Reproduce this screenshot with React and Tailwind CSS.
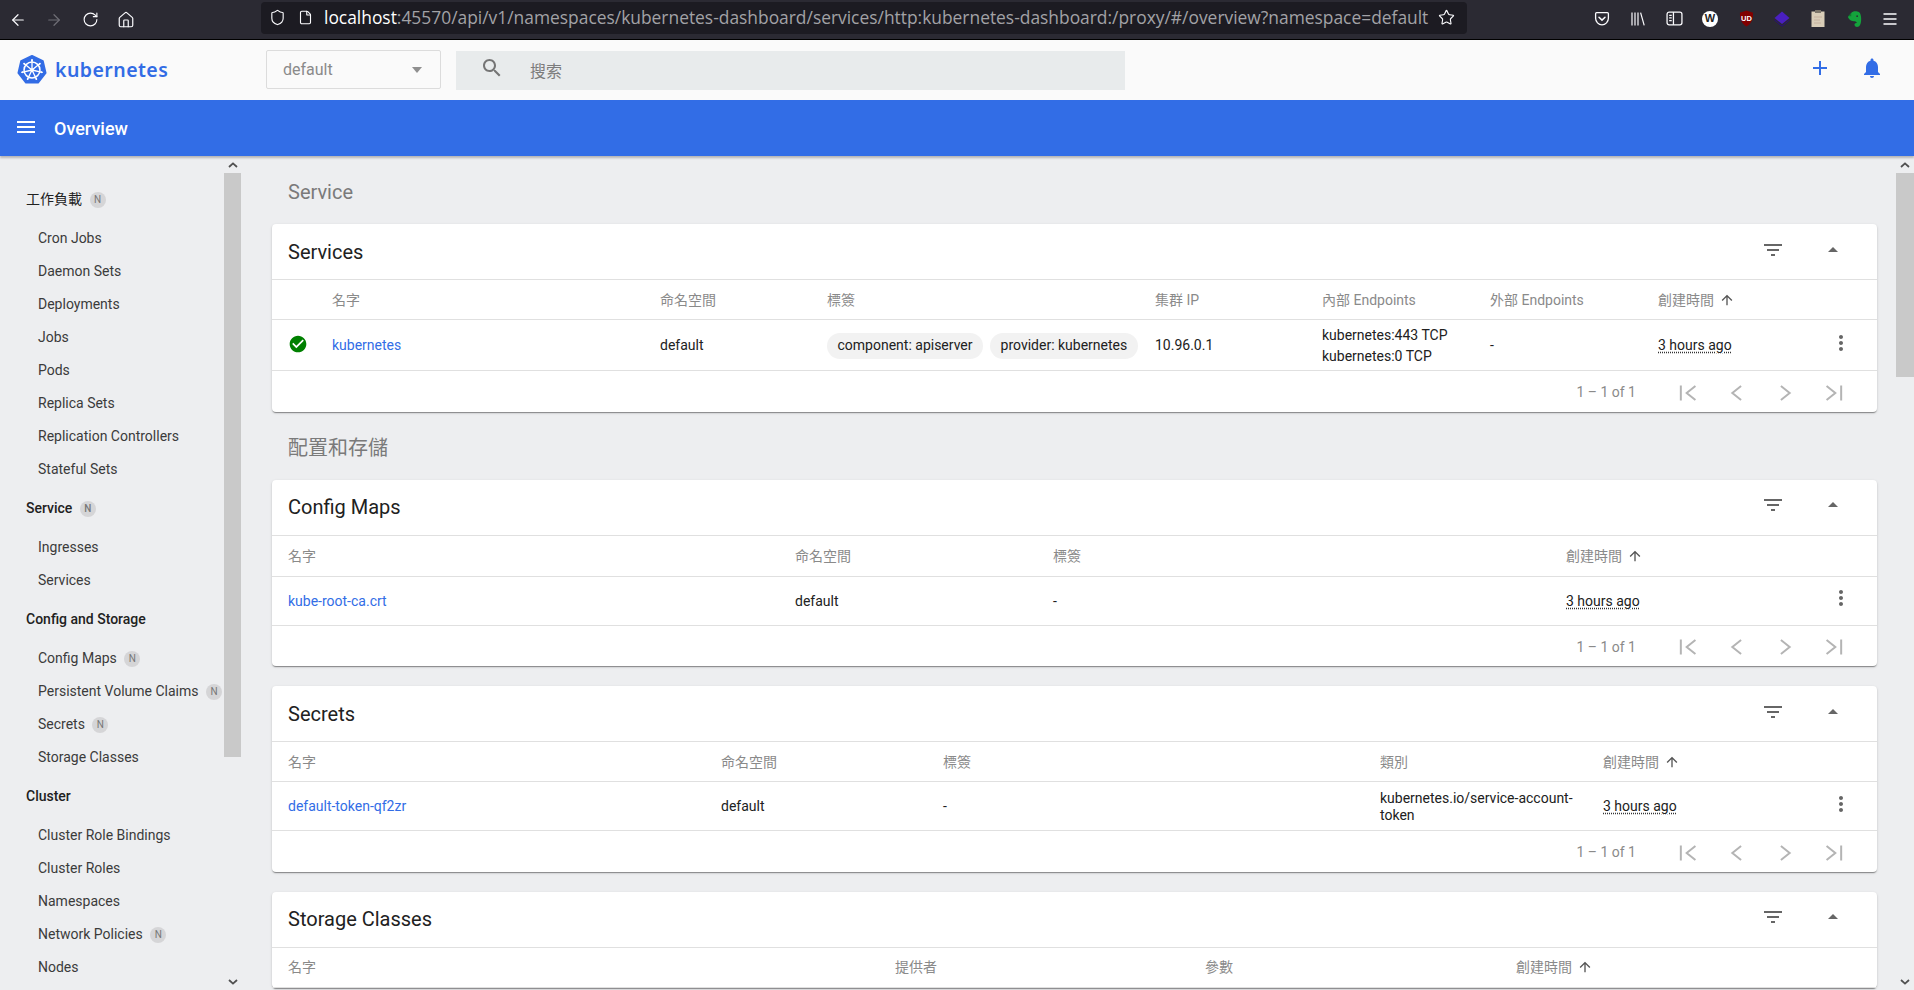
import React from "react";
import { ArrowLeft, ArrowRight, RotateCw, Home, Shield, File, Star } from "lucide-react";

const P = {
  filter: "M10 18h4v-2h-4v2zM3 6v2h18V6H3zm3 7h12v-2H6v2z",
  up: "M7 14l5-5 5 5z",
  more: "M12 8c1.1 0 2-.9 2-2s-.9-2-2-2-2 .9-2 2 .9 2 2 2zm0 2c-1.1 0-2 .9-2 2s.9 2 2 2 2-.9 2-2-.9-2-2-2zm0 6c-1.1 0-2 .9-2 2s.9 2 2 2 2-.9 2-2-.9-2-2-2z",
  arrow: "M4 12l1.41 1.41L11 7.83V20h2V7.83l5.58 5.59L20 12l-8-8-8 8z",
  check: "M12 2C6.48 2 2 6.48 2 12s4.48 10 10 10 10-4.48 10-10S17.52 2 12 2zm-2 15l-5-5 1.41-1.41L10 14.17l7.59-7.59L19 8l-9 9z",
  bell: "M12 22c1.1 0 2-.9 2-2h-4c0 1.1.89 2 2 2zm6-6v-5c0-3.07-1.64-5.64-4.5-6.32V4c0-.83-.67-1.5-1.5-1.5s-1.5.67-1.5 1.5v.68C7.63 5.36 6 7.92 6 11v5l-2 2v1h16v-1l-2-2z",
  plus: "M19 13h-6v6h-2v-6H5v-2h6V5h2v6h6v2z",
  search: "M15.5 14h-.79l-.28-.27C15.41 12.59 16 11.11 16 9.5 16 5.91 13.09 3 9.5 3S3 5.91 3 9.5 5.91 16 9.5 16c1.61 0 3.09-.59 4.23-1.57l.27.28v.79l5 4.99L20.49 19l-4.99-5zm-6 0C7.01 14 5 11.99 5 9.5S7.01 5 9.5 5 14 7.01 14 9.5 11.99 14 9.5 14z",
  menu: "M3 18h18v-2H3v2zm0-5h18v-2H3v2zm0-7v2h18V6H3z",
};

const PAGER = [
  "M5 5.5v13M17.5 6L10 12l7.5 6",
  "M15.5 6L8 12l7.5 6",
  "M8.5 6L16 12l-7.5 6",
  "M6.5 6L14 12l-7.5 6M19 5.5v13",
];

function Mi({ d, className = "" }) {
  return (
    <svg viewBox="0 0 24 24" fill="currentColor" className={"shrink-0 " + className}>
      <path d={d} />
    </svg>
  );
}

function K8sLogo() {
  const spokes = [0, 51.4, 102.8, 154.3, 205.7, 257.1, 308.6];
  return (
    <svg viewBox="0 0 32 32" className="w-[30px] h-[30px] shrink-0">
      <path d="M16 1 L27.6 6.6 L30.5 19.2 L22.4 29.4 L9.6 29.4 L1.5 19.2 L4.4 6.6 Z" fill="#326ce5" stroke="#326ce5" strokeWidth="2" strokeLinejoin="round" />
      <circle cx="16" cy="16" r="8.5" fill="none" stroke="#fff" strokeWidth="1.6" />
      <circle cx="16" cy="16" r="2" fill="#fff" />
      {spokes.map((a) => (
        <g key={a} transform={`rotate(${a} 16 16)`}>
          <line x1="16" y1="16" x2="16" y2="5" stroke="#fff" strokeWidth="1.4" strokeLinecap="round" />
          <circle cx="16" cy="5.5" r="1" fill="#fff" />
        </g>
      ))}
    </svg>
  );
}

function Chevron({ dir }) {
  return (
    <svg viewBox="0 0 10 6" className="w-[10px] h-[6px]" fill="none" stroke="#505050" strokeWidth="1.8">
      <path d={dir === "up" ? "M1 5 L5 1.4 L9 5" : "M1 1 L5 4.6 L9 1"} />
    </svg>
  );
}

function ToolCell({ children }) {
  return <div className="w-9 h-full flex items-center justify-center shrink-0">{children}</div>;
}

function BrowserBar() {
  return (
    <div className="h-10 shrink-0 bg-[#2b2a33] border-b border-black flex items-center text-[#fbfbfe]">
      <ToolCell><ArrowLeft size={18} strokeWidth={1.6} /></ToolCell>
      <ToolCell><ArrowRight size={18} strokeWidth={1.6} className="text-[#6f6e76]" /></ToolCell>
      <ToolCell><RotateCw size={17} strokeWidth={1.6} /></ToolCell>
      <ToolCell><Home size={18} strokeWidth={1.6} /></ToolCell>
      <div className="ml-[117px] w-[1206px] h-8 -mt-1 bg-[#1c1b22] rounded-[4px] flex items-center pl-[8px] shrink-0">
        <Shield size={17} strokeWidth={1.6} className="shrink-0" />
        <File size={15} strokeWidth={1.8} className="ml-[12px] shrink-0" />
        <div className="ml-[11px] w-[1112px] whitespace-nowrap text-[17.4px] font-['Open_Sans',sans-serif]">
          <span className="text-white">localhost</span>
          <span className="text-[#a2a2a6]">:45570/api/v1/namespaces/kubernetes-dashboard/services/http:kubernetes-dashboard:/proxy/#/overview?namespace=default</span>
        </div>
        <Star size={17} strokeWidth={1.6} className="ml-[2px] shrink-0" />
      </div>
      <div className="ml-[117px] flex h-full items-center -mt-0.5">
        <ToolCell>
          <svg viewBox="0 0 16 16" className="w-[16px] h-[16px]" fill="none" stroke="#fbfbfe" strokeWidth="1.3">
            <path d="M2.6 1.7h10.8c.6 0 1 .4 1 1v4.6c0 3.5-2.9 6.6-6.4 6.6S1.6 10.8 1.6 7.3V2.7c0-.6.4-1 1-1z" />
            <path d="M5 6.2l3 2.9 3-2.9" strokeWidth="1.5" strokeLinecap="round" />
          </svg>
        </ToolCell>
        <ToolCell>
          <svg viewBox="0 0 16 16" className="w-[16px] h-[16px]" fill="none" stroke="#fbfbfe" strokeWidth="1.2">
            <path d="M2 1.5v13M5 1.5v13M8 1.5v13M10.6 1.7l3.6 12.7" />
          </svg>
        </ToolCell>
        <ToolCell>
          <svg viewBox="0 0 16 16" className="w-[17px] h-[17px]" fill="none" stroke="#fbfbfe" strokeWidth="1.2">
            <rect x="1" y="2" width="14" height="12" rx="2" />
            <path d="M7 2v12" />
            <path d="M3 5h2.4M3 7.5h2.4M3 10h2.4" />
          </svg>
        </ToolCell>
        <ToolCell>
          <div className="w-4 h-4 rounded-full bg-white flex items-center justify-center text-[11px] font-bold text-[#222] leading-none font-['Liberation_Sans',sans-serif]">W</div>
        </ToolCell>
        <ToolCell>
          <svg viewBox="0 0 16 18" className="w-[15px] h-[17px]">
            <path d="M8 0.5L15 2.8C15 9 14 14 8 17.5 2 14 1 9 1 2.8z" fill="#800000" />
            <text x="8" y="11.5" fontSize="8" textAnchor="middle" fill="#fff" fontFamily="Liberation Sans" fontWeight="700">UD</text>
          </svg>
        </ToolCell>
        <ToolCell>
          <svg viewBox="0 0 16 16" className="w-[16px] h-[16px]">
            <path d="M8 0.5L15.5 7 8 13 0.5 7z" fill="#4a1fc0" />
            <path d="M0.5 8.500L8 14.5l7.5-6L15.5 9.500 8 15.8 0.5 9.500z" fill="#2a0e7a" />
          </svg>
        </ToolCell>
        <ToolCell>
          <svg viewBox="0 0 14 17" className="w-[14px] h-[17px]">
            <rect x="0.5" y="1.5" width="13" height="15.5" fill="#d9cdb8" />
            <rect x="4" y="0" width="6" height="3" fill="#7d766b" />
            <path d="M3 7h8M3 10h6M3 13h7" stroke="#c2a99a" strokeWidth="0.8" />
          </svg>
        </ToolCell>
        <ToolCell>
          <svg viewBox="0 0 16 18" className="w-[15px] h-[18px]">
            <path d="M4.5 2.500C5.500 1 8.500 0.500 11 1c2.500 0.500 3.500 2 4 6 0.400 4-0.200 8.500-2.500 10-1.800 1-4 0.500-4.500-1.500-0.300-1.500 1-2.500 2.500-2.200-0.200-1.500-1.500-2-3-2C5 11.300 3 10.500 1.500 8 1 7 1 6.300 1.500 6z" fill="#14a33c" />
            <path d="M4.5 2.500v3.500H1.500z" fill="#0e7a2c" />
            <circle cx="10.800" cy="6" r="0.9" fill="#2b2a33" />
          </svg>
        </ToolCell>
        <ToolCell>
          <svg viewBox="0 0 16 16" className="w-[16px] h-[16px]" fill="none" stroke="#fbfbfe" strokeWidth="1.3">
            <path d="M1.5 3h13M1.5 8h13M1.5 13h13" />
          </svg>
        </ToolCell>
      </div>
    </div>
  );
}

function AppToolbar() {
  return (
    <div className="h-[60px] shrink-0 bg-[#fafafa] flex items-center">
      <div className="ml-[17px] w-[240px] flex items-center shrink-0">
        <K8sLogo />
        <span className="ml-[8px] text-[19.5px] font-semibold text-[#326ce5] tracking-[0.45px] font-['Noto_Sans',sans-serif] leading-none">kubernetes</span>
      </div>
      <div className="ml-[9px] w-[175px] h-[39px] -mt-[1px] border border-[#dcdcdc] bg-[#fafafa] rounded-[2px] flex items-center justify-between pl-[16px] pr-[18px] shrink-0">
        <span className="text-[16px] text-[#8a8a8a] mt-[1px]">default</span>
        <span className="w-0 h-0 border-x-[5px] border-x-transparent border-t-[6px] border-t-[#8f8f8f]" />
      </div>
      <div className="ml-[15px] w-[669px] h-[39px] bg-[#e8ebec] flex items-center shrink-0">
        <Mi d={P.search} className="ml-[24px] w-6 h-6 text-[#757575] -mt-[5px]" />
        <span className="ml-[26px] text-[16px] text-[#7c7c7c] mt-[4px]">搜索</span>
      </div>
      <div className="flex-1" />
      <Mi d={P.plus} className="w-6 h-6 text-[#326de6] -mt-[4px]" />
      <Mi d={P.bell} className="ml-[28px] mr-[30px] w-6 h-6 text-[#326de6] -mt-[4px]" />
    </div>
  );
}

function BlueBar() {
  return (
    <div className="h-14 shrink-0 bg-[#326de6] flex items-center relative shadow-[0_2px_2px_rgba(0,0,0,0.24)] z-10">
      <Mi d={P.menu} className="ml-[14px] w-6 h-6 text-white -mt-[2px]" />
      <span className="ml-[16px] text-[18px] font-medium text-white mt-[1px]">Overview</span>
    </div>
  );
}

function Badge() {
  return (
    <span className="w-4 h-4 rounded-full bg-[#d5d5d7] text-[#777] text-[10px] flex items-center justify-center leading-none shrink-0">N</span>
  );
}

function NavSection({ label, badge, cjk }) {
  return (
    <div className={`h-[45px] pl-[26px] flex items-center gap-[7.5px] text-[14px] text-[#212121] ${cjk ? "font-normal" : "font-medium"}`}>
      <span>{label}</span>
      {badge && <Badge />}
    </div>
  );
}

function NavItem({ label, badge }) {
  return (
    <div className="h-[33px] pl-[38px] flex items-center gap-[7.5px] text-[14px] text-[#3b3b3b] whitespace-nowrap">
      <span>{label}</span>
      {badge && <Badge />}
    </div>
  );
}

function Sidebar() {
  return (
    <div className="w-[241px] shrink-0 flex">
      <div className="w-[224px] pt-[21px] overflow-hidden">
        <NavSection label="工作負載" badge cjk />
        {["Cron Jobs", "Daemon Sets", "Deployments", "Jobs", "Pods", "Replica Sets", "Replication Controllers", "Stateful Sets"].map((s) => (
          <NavItem key={s} label={s} />
        ))}
        <NavSection label="Service" badge />
        <NavItem label="Ingresses" />
        <NavItem label="Services" />
        <NavSection label="Config and Storage" />
        <NavItem label="Config Maps" badge />
        <NavItem label="Persistent Volume Claims" badge />
        <NavItem label="Secrets" badge />
        <NavItem label="Storage Classes" />
        <NavSection label="Cluster" />
        <NavItem label="Cluster Role Bindings" />
        <NavItem label="Cluster Roles" />
        <NavItem label="Namespaces" />
        <NavItem label="Network Policies" badge />
        <NavItem label="Nodes" />
      </div>
      <div className="w-[17px] flex flex-col items-center">
        <div className="h-[17px] flex items-center justify-center"><Chevron dir="up" /></div>
        <div className="w-full h-[584px] bg-[#c9c9c9]" />
        <div className="flex-1" />
        <div className="h-[17px] flex items-center justify-center"><Chevron dir="down" /></div>
      </div>
    </div>
  );
}

function Pager() {
  return (
    <div className="h-[40.5px] flex items-center justify-end pr-[20px] pt-[3px] text-[14px] text-[#8a8a8a]">
      <span className="mr-[29px]">1 – 1 of 1</span>
      {PAGER.map((d, i) => (
        <div key={i} className="w-12 flex justify-center">
          <svg viewBox="0 0 24 24" fill="none" stroke="currentColor" strokeWidth="1.7" className="w-7 h-7 text-[#b4b4b4]">
            <path d={d} />
          </svg>
        </div>
      ))}
    </div>
  );
}

function Created() {
  return (
    <div className="flex items-center justify-between pr-[24px] w-full">
      <span className="text-[#212121] underline decoration-dotted decoration-[#333] underline-offset-[2px] whitespace-nowrap">3 hours ago</span>
      <Mi d={P.more} className="w-6 h-6 text-[#666] -mt-[6px]" />
    </div>
  );
}

function CreatedHead() {
  return (
    <span className="flex items-center gap-[5px] whitespace-nowrap">
      創建時間
      <Mi d={P.arrow} className="w-4 h-4 text-[#555] -mt-[1px]" />
    </span>
  );
}

function Card({ title, gridClass, heads, row, rowH, headH = "h-[40px]", footer = true }) {
  return (
    <div className="bg-white rounded-[4px] shadow-[0_2px_1px_-1px_rgba(0,0,0,0.25),0_1px_1px_0_rgba(0,0,0,0.16),0_1px_3px_0_rgba(0,0,0,0.14)]">
      <div className="h-[56px] flex items-center justify-between pl-[16px] pr-[32px] border-b border-[#e0e0e0]">
        <span className="text-[20px] text-[#212121]">{title}</span>
        <div className="flex items-center -mt-[4px]">
          <Mi d={P.filter} className="w-6 h-6 text-[#666]" />
          <Mi d={P.up} className="ml-[36px] w-6 h-6 text-[#666]" />
        </div>
      </div>
      <div className={`${gridClass} ${headH} items-center pt-[1.5px] border-b border-[#e0e0e0] text-[14px] text-[#8a8a8a]`}>
        {heads.map((h, i) => (
          <div key={i}>{h}</div>
        ))}
      </div>
      {row && (
        <div className={`${gridClass} ${rowH} items-center pt-[1.5px] border-b border-[#e0e0e0] text-[14px] text-[#212121]`}>
          {row.map((c, i) => (
            <div key={i}>{c}</div>
          ))}
        </div>
      )}
      {footer && <Pager />}
    </div>
  );
}

function SectionTitle({ children }) {
  return <div className="h-[68px] pt-[4px] pl-[16px] flex items-center text-[20px] text-[#7a7a7a]">{children}</div>;
}

function Link({ children }) {
  return <span className="text-[#326de6]">{children}</span>;
}

function Chip({ children }) {
  return <span className="h-[26px] px-[10.5px] rounded-full bg-[#f2f2f2] flex items-center whitespace-nowrap">{children}</span>;
}

function Main() {
  return (
    <div className="flex-1 min-w-0 pl-[31px] pr-[19px] overflow-hidden">
      <SectionTitle>Service</SectionTitle>
      <Card
        title="Services"
        gridClass="grid grid-cols-[60px_328px_167px_328px_167px_168px_168px_1fr]"
        heads={["", "名字", "命名空間", "標簽", "集群 IP", "內部 Endpoints", "外部 Endpoints", <CreatedHead />]}
        rowH="h-[51px]"
        row={[
          <div className="flex justify-center pr-[8px]"><Mi d={P.check} className="w-5 h-5 text-[#008000] -mt-[4px]" /></div>,
          <Link>kubernetes</Link>,
          "default",
          <div className="flex gap-[7px]"><Chip>component: apiserver</Chip><Chip>provider: kubernetes</Chip></div>,
          "10.96.0.1",
          <div className="leading-[21px]"><div>kubernetes:443 TCP</div><div>kubernetes:0 TCP</div></div>,
          "-",
          <Created />,
        ]}
      />
      <SectionTitle>配置和存儲</SectionTitle>
      <div className="flex flex-col gap-[20px]">
        <Card
          title="Config Maps"
          gridClass="grid grid-cols-[16px_507px_258px_513px_1fr]"
          heads={["", "名字", "命名空間", "標簽", <CreatedHead />]}
          headH="h-[41px]"
          rowH="h-[49px]"
          row={["", <Link>kube-root-ca.crt</Link>, "default", "-", <Created />]}
        />
        <Card
          title="Secrets"
          gridClass="grid grid-cols-[16px_433px_222px_437px_223px_1fr]"
          heads={["", "名字", "命名空間", "標簽", "類別", <CreatedHead />]}
          rowH="h-[49px]"
          row={[
            "",
            <Link>default-token-qf2zr</Link>,
            "default",
            "-",
            <div className="leading-[17px] w-[196px]">kubernetes.io/service-account-token</div>,
            <Created />,
          ]}
        />
        <Card
          title="Storage Classes"
          gridClass="grid grid-cols-[16px_607px_310px_311px_1fr]"
          heads={["", "名字", "提供者", "參數", <CreatedHead />]}
          footer={false}
        />
      </div>
    </div>
  );
}

function MainScroll() {
  return (
    <div className="w-[18px] shrink-0 flex flex-col items-center">
      <div className="h-[17px] flex items-center justify-center"><Chevron dir="up" /></div>
      <div className="w-full h-[204px] bg-[#c9c9c9]" />
      <div className="flex-1" />
      <div className="h-[17px] flex items-center justify-center"><Chevron dir="down" /></div>
    </div>
  );
}

export default function App() {
  return (
    <div className="w-[1914px] h-[990px] overflow-hidden flex flex-col bg-[#edeef0] font-['Roboto','Noto_Sans_CJK_TC',sans-serif]">
      <BrowserBar />
      <AppToolbar />
      <BlueBar />
      <div className="flex-1 min-h-0 flex overflow-hidden">
        <Sidebar />
        <Main />
        <MainScroll />
      </div>
    </div>
  );
}
